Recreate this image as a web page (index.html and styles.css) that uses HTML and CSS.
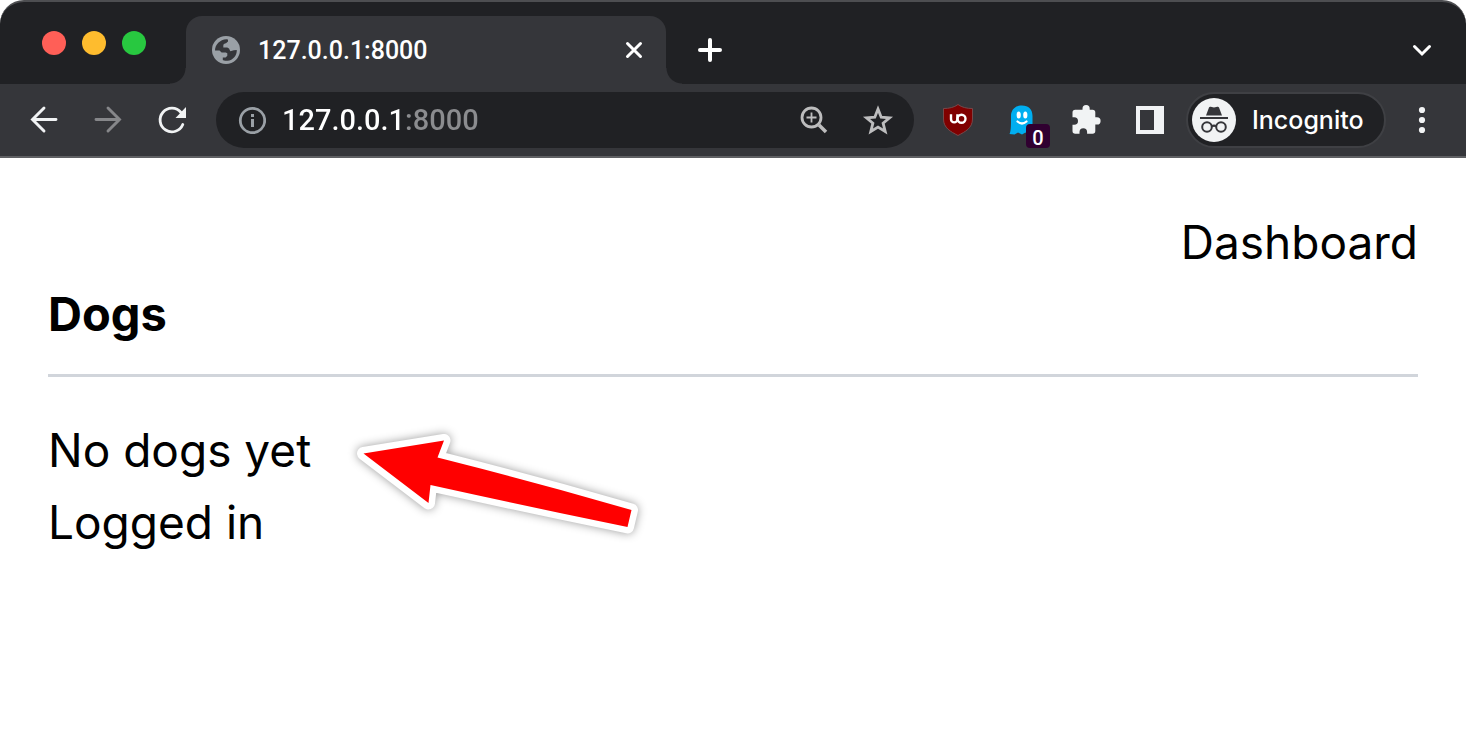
FILE: index.html
```
<!DOCTYPE html>
<html lang="en">
<head>
<meta charset="utf-8">
<title>127.0.0.1:8000</title>
<link rel="stylesheet" href="styles.css">
</head>
<body>
<div class="window">
  <header class="tabstrip">
    <div class="lights">
      <button class="light close" aria-label="Close window"></button>
      <button class="light minimize" aria-label="Minimize window"></button>
      <button class="light maximize" aria-label="Maximize window"></button>
    </div>
    <div class="tab">
      <svg class="globe" viewBox="0 0 28 28" aria-hidden="true">
        <circle cx="14" cy="14" r="14" fill="#9aa0a6"/>
        <path fill="#35363a" d="M3 14.6C3 8.5 8 3.500 14.500 3.200C15.600 3.200 16 3.400 16 4.200V5.500L14 7.200C12.500 7.200 11.300 8.200 11.300 9.400V11.500H15.200L17 12.500L18.300 15.200L21.800 14.200L24.800 14C25 19.500 21 24.200 15.500 24.800C13.500 25 11.200 24.600 10.800 24V21.400H13.600L15.300 19.700V17.200L13.800 16.400H9.600L7.500 14.600Z"/>
      </svg>
      <span class="tab-title">127.0.0.1:8000</span>
      <button class="icon-button tab-close" aria-label="Close tab">
        <svg viewBox="0 0 24 24"><path d="M5.500 5.500l13 13m0-13l-13 13" stroke="#fff" stroke-width="3" stroke-linecap="round"/></svg>
      </button>
    </div>
    <button class="icon-button strip-button" aria-label="New tab">
      <svg viewBox="0 0 56 56"><path d="M28 18v20M18 28h20" stroke="#fff" stroke-width="4" stroke-linecap="round"/></svg>
    </button>
    <button class="icon-button strip-button tab-search" aria-label="Search tabs">
      <svg viewBox="0 0 56 56"><path d="M20.500 24.500l7.500 7.500 7.500-7.500" fill="none" stroke="#fff" stroke-width="3" stroke-linecap="round"/></svg>
    </button>
  </header>

  <nav class="toolbar" aria-label="Browser toolbar">
    <div class="group">
      <button class="icon-button" aria-label="Back">
        <svg viewBox="0 0 56 56"><path d="M40 27.500H17M28 16L16.500 27.500 28 39" fill="none" stroke="#f1f3f4" stroke-width="2.900" stroke-linecap="round"/></svg>
      </button>
      <button class="icon-button" aria-label="Forward">
        <svg viewBox="0 0 56 56"><path d="M16 27.500H39M28 16L39.500 27.500 28 39" fill="none" stroke="#86878a" stroke-width="2.900" stroke-linecap="round"/></svg>
      </button>
      <button class="icon-button" aria-label="Reload">
        <svg viewBox="0 0 56 56"><path d="M38.800 32.500A11.800 11.800 0 1 1 37 20.500" fill="none" stroke="#f1f3f4" stroke-width="2.800" stroke-linecap="round"/><path d="M42 15v11H31.500z" fill="#f1f3f4"/></svg>
      </button>
    </div>
    <div class="omnibox">
      <svg class="info" viewBox="0 0 28 28" aria-hidden="true"><circle cx="14.500" cy="14.500" r="12.200" fill="none" stroke="#9aa0a6" stroke-width="2.800"/><path d="M13 8h3v3h-3zM13 13h3v8h-3z" fill="#9aa0a6"/></svg>
      <input class="address" type="text" value="127.0.0.1:8000" aria-label="Address">
      <button class="icon-button" aria-label="Zoom">
        <svg viewBox="0 0 56 56"><g fill="none" stroke="#bdbdbe"><circle cx="25.500" cy="25.500" r="9.500" stroke-width="2.800"/><path d="M33 33l7 7" stroke-width="3.600"/><path d="M25.500 20.500v10M20.500 25.500h10" stroke-width="1.800"/></g></svg>
      </button>
      <button class="icon-button" aria-label="Bookmark this tab">
        <svg viewBox="0 0 56 56"><path d="M28 17l3.200 8.200 8.300.7-6.400 5.300 2.100 8.300-7.200-4.400-7.200 4.400 2.100-8.300-6.400-5.300 8.300-.7z" fill="none" stroke="#bdbdbe" stroke-width="2.800"/></svg>
      </button>
    </div>
    <div class="group">
      <button class="icon-button" aria-label="uBlock Origin">
        <svg viewBox="0 0 56 56"><path d="M28 12.500C24 15.500 19 16.500 13.500 16.500V27C13.500 36 20.500 39.500 28 43.500 35.500 39.500 42.500 36 42.500 27V16.500C37 16.500 32 15.500 28 12.500z" fill="#800000" stroke="#77484a"/><path d="M21 22.200v5a3.200 3.200 0 0 0 6.400 0V22.200" fill="none" stroke="#fff" stroke-width="2.400"/><circle cx="31.500" cy="26.700" r="4" fill="none" stroke="#fff" stroke-width="2.400"/></svg>
      </button>
      <button class="icon-button ghost" aria-label="Ghostery, 0 trackers">
        <svg viewBox="0 0 56 56"><path d="M17 24C17 17.500 21.500 13.500 28 13.500S38.500 17.500 38.500 24V42L34 42.500 31.500 40.500 28 42.500 24 40.500 20.500 42.500 15.500 42C17.200 39 17 31 17 24z" fill="#00aef0"/><ellipse cx="24.700" cy="23" rx="2.100" ry="3.500" fill="#fff"/><ellipse cx="31.300" cy="23" rx="2.100" ry="3.500" fill="#fff"/><path d="M23.500 29.500Q28 33.500 32.500 29.500" fill="none" stroke="#fff" stroke-width="2.200" stroke-linecap="round"/></svg>
        <span class="badge">0</span>
      </button>
      <button class="icon-button" aria-label="Extensions">
        <svg viewBox="0 0 56 56"><path d="M39 25.300H37.300V20.500a2.700 2.700 0 0 0-2.700-2.700H31.700V16.700a3.600 3.600 0 0 0-7.200 0v1.100H17.200a2.700 2.700 0 0 0-2.700 2.700v4.700h1.700a3.800 3.800 0 0 1 0 7.600h-1.700V39a2.700 2.700 0 0 0 2.700 2.700h4.300V40a3.800 3.800 0 0 1 7.600 0v1.700h5.500a2.700 2.700 0 0 0 2.700-2.700v-6.500H39a3.600 3.600 0 0 0 0-7.200z" fill="#f1f3f4"/></svg>
      </button>
      <button class="icon-button" aria-label="Side panel">
        <svg viewBox="0 0 56 56"><path fill-rule="evenodd" d="M14 14h28v28H14zM18 18v20h14V18z" fill="#f1f3f4"/></svg>
      </button>
      <button class="profile">
        <svg viewBox="0 0 44 44" aria-hidden="true"><circle cx="22" cy="22" r="22" fill="#f1f3f4"/><path d="M14 17.500L17 9.500Q17.500 8.400 18.800 8.800L22 9.600 25.200 8.800Q26.500 8.400 27 9.500L30 17.500zM8 19h28v2H8z" fill="#35363a"/><g fill="none" stroke="#35363a" stroke-width="2"><circle cx="15" cy="29" r="4.800"/><circle cx="29" cy="29" r="4.800"/><path d="M19.800 28.500Q22 26.800 24.200 28.500"/></g></svg>
        <span>Incognito</span>
      </button>
      <button class="icon-button" aria-label="Menu">
        <svg viewBox="0 0 56 56"><g fill="#f1f3f4"><circle cx="28" cy="18" r="3.100"/><circle cx="28" cy="28" r="3.100"/><circle cx="28" cy="38" r="3.100"/></g></svg>
      </button>
    </div>
  </nav>

  <main class="page">
    <a class="dashboard" href="#">Dashboard</a>
    <h1 class="heading">Dogs</h1>
    <hr class="rule">
    <p class="line">No dogs yet
      <svg class="arrow" viewBox="340 420 320 130" aria-hidden="true">
        <g class="arrow-shape" stroke-linejoin="round"><path d="M363.500 453.500L444 440.500 437.500 457.500Q535 482 631.500 510L627.500 527Q530 507 430.500 485L428.500 503z" fill="#f00" stroke="#fff" stroke-width="13" paint-order="stroke"/></g>
      </svg>
    </p>
    <p class="line">Logged in</p>
  </main>
</div>
</body>
</html>
```
FILE: styles.css
```
* {
  box-sizing: border-box;
}

body {
  margin: 0;
  background: #fff;
  color: #000;
  font-family: Inter, "Liberation Sans", sans-serif;
}

button {
  padding: 0;
  border: 0;
  background: none;
  color: inherit;
  font: inherit;
}

svg {
  display: block;
}

.tabstrip {
  display: flex;
  align-items: flex-start;
  height: 84px;
  padding: 0 16px 0 42px;
  border-top: 2px solid #4d4e51;
  border-radius: 24px 24px 0 0;
  background: #202124;
}

.lights {
  display: flex;
  gap: 16px;
  margin-right: 40px;
  padding-top: 29px;
}

.light {
  width: 24px;
  height: 24px;
  border-radius: 50%;
}

.close { background: #ff5f57; }
.minimize { background: #febc2e; }
.maximize { background: #28c840; }

.tab {
  position: relative;
  display: flex;
  align-items: center;
  width: 480px;
  height: 68px;
  margin-top: 14px;
  padding: 0 20px 0 26px;
  border-radius: 16px 16px 0 0;
  background: #35363a;
  color: #fff;
}

.tab::before,
.tab::after {
  content: "";
  position: absolute;
  bottom: 0;
  width: 16px;
  height: 16px;
}

.tab::before {
  right: 100%;
  background: radial-gradient(circle at 0 0, #202124 15px, #35363a 16px);
}

.tab::after {
  left: 100%;
  background: radial-gradient(circle at 100% 0, #202124 15px, #35363a 16px);
}

.globe {
  width: 28px;
  height: 28px;
}

.tab-title {
  flex: 1;
  margin-left: 18px;
  font-family: Roboto, "Liberation Sans", sans-serif;
  font-size: 25px;
  font-weight: 500;
}

.icon-button {
  flex: none;
  width: 56px;
  height: 56px;
}

.tab-close {
  width: 24px;
  height: 24px;
}

.strip-button {
  margin: 20px 0 0 16px;
}

.tab-search {
  margin-left: auto;
}

.toolbar {
  display: flex;
  gap: 16px;
  padding: 8px 16px;
  border-bottom: 2px solid #5f6063;
  background: #35363a;
}

.group {
  display: flex;
  gap: 8px;
}

.omnibox {
  display: flex;
  flex: 1;
  gap: 8px;
  align-items: center;
  min-width: 0;
  padding: 0 8px 0 22px;
  border-radius: 28px;
  background: #202124;
}

.info {
  flex: none;
  width: 28px;
  height: 28px;
}

.address {
  flex: 1;
  min-width: 0;
  height: 56px;
  margin-left: 8px;
  padding: 0;
  border: 0;
  outline: 0;
  background: linear-gradient(90deg, #fff 121px, #8b8c8f 121px);
  background-clip: text;
  color: #fff;
  -webkit-text-fill-color: transparent;
  font-family: Roboto, "Liberation Sans", sans-serif;
  font-size: 29px;
  font-weight: 500;
}

.ghost {
  position: relative;
}

.badge {
  position: absolute;
  right: 0;
  bottom: 0;
  width: 24px;
  height: 24px;
  border-radius: 4px;
  background: #300030;
  color: #fff;
  font-family: Roboto, "Liberation Sans", sans-serif;
  font-size: 20px;
  font-weight: 500;
  line-height: 28px;
  text-align: center;
}

.profile {
  display: flex;
  gap: 16px;
  align-items: center;
  width: 200px;
  height: 56px;
  padding: 0 4px;
  border: 2px solid #3f4044;
  border-radius: 28px;
  background: #202124;
  color: #fff;
  font-size: 25px;
  font-weight: 500;
}

.profile svg {
  width: 44px;
  height: 44px;
}

.page {
  display: flex;
  flex-direction: column;
  padding: 48px;
  font-size: 46px;
  line-height: 72px;
}

.dashboard {
  align-self: flex-end;
  color: inherit;
  text-decoration: none;
}

.heading {
  margin: 0;
  font-size: 47px;
  font-weight: 700;
}

.rule {
  width: 100%;
  height: 3px;
  margin: 24px 0 37px;
  border: 0;
  background: #d1d5db;
}

.line {
  position: relative;
  margin: 0;
}

.arrow {
  position: absolute;
  top: 6px;
  left: 292px;
  width: 320px;
  height: 130px;
}

.arrow-shape {
  filter: drop-shadow(0 0 5px rgba(0, 0, 0, 0.4));
}
```
